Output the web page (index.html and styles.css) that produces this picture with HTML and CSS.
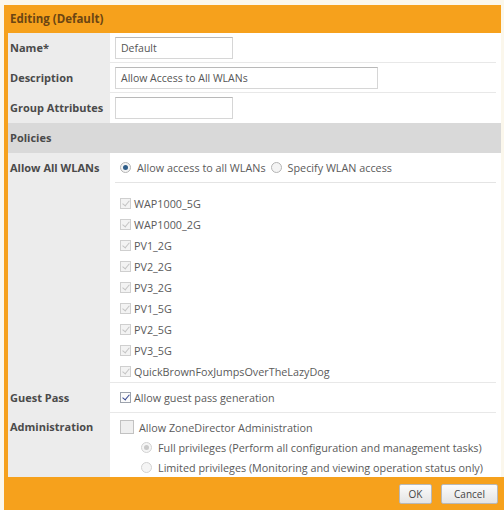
FILE: index.html
```html
<!DOCTYPE html>
<html lang="en">
<head>
  <meta charset="UTF-8" />
  <meta name="viewport" content="width=device-width, initial-scale=1.0" />
  <title>Editing (Default)</title>
  <link rel="stylesheet" href="styles.css">
</head>
<body>
  <div class="dialog">
    <div class="dialog-title">Editing (Default)</div>

    <div class="row">
      <div class="label">Name*</div>
      <div class="value"><div class="field short">Default</div></div>
    </div>
    <div class="row">
      <div class="label">Description</div>
      <div class="value"><div class="field long">Allow Access to All WLANs</div></div>
    </div>
    <div class="row">
      <div class="label">Group Attributes</div>
      <div class="value last"><div class="field short"></div></div>
    </div>

    <div class="section">Policies</div>

    <div class="row">
      <div class="label">Allow All WLANs</div>
      <div class="value block">
        <div class="option-line radios">
          <label><span class="rd on"></span>Allow access to all WLANs</label>
          <label><span class="rd"></span>Specify WLAN access</label>
        </div>
        <div class="wlan-list">
          <label class="item"><span class="cb on"></span>WAP1000_5G</label>
          <label class="item"><span class="cb on"></span>WAP1000_2G</label>
          <label class="item"><span class="cb on"></span>PV1_2G</label>
          <label class="item"><span class="cb on"></span>PV2_2G</label>
          <label class="item"><span class="cb on"></span>PV3_2G</label>
          <label class="item"><span class="cb on"></span>PV1_5G</label>
          <label class="item"><span class="cb on"></span>PV2_5G</label>
          <label class="item"><span class="cb on"></span>PV3_5G</label>
          <label class="item"><span class="cb on"></span>QuickBrownFoxJumpsOverTheLazyDog</label>
        </div>
      </div>
    </div>

    <div class="row">
      <div class="label">Guest Pass</div>
      <div class="value">
        <label class="item"><span class="cb active on"></span>Allow guest pass generation</label>
      </div>
    </div>

    <div class="row admin">
      <div class="label">Administration</div>
      <div class="value block last">
        <label class="item"><span class="cb big"></span>Allow ZoneDirector Administration</label>
        <label class="item sub"><span class="rd dim on"></span>Full privileges (Perform all configuration and management tasks)</label>
        <label class="item sub"><span class="rd dim"></span>Limited privileges (Monitoring and viewing operation status only)</label>
      </div>
    </div>

    <div class="dialog-footer">
      <button class="btn ok">OK</button>
      <button class="btn cancel">Cancel</button>
    </div>
  </div>
</body>
</html>
```

FILE: styles.css
```css
* {
  box-sizing: border-box;
}
body {
  font-family: 'Open Sans', 'DejaVu Sans', sans-serif;
  font-size: 10.8px;
  background: #fbf7ec;
  margin: 0;
  color: #5a5a5a;
}
.dialog {
  margin: 5px 3px 0 4px;
  border-left: 4px solid #f6a11c;
  background: #fff;
}
.dialog-title {
  height: 28px;
  line-height: 28px;
  background: #f6a11c;
  color: #6b4513;
  font-weight: bold;
  font-size: 11.5px;
  padding-left: 2px;
}
.row {
  display: grid;
  grid-template-columns: 102px 1fr;
}
.label {
  background: #ececec;
  color: #4a4a4a;
  font-weight: bold;
  font-size: 11px;
  line-height: 30px;
  padding-left: 2px;
  white-space: nowrap;
}
.value {
  display: flex;
  align-items: center;
  min-height: 30px;
  padding-left: 5px;
  border-bottom: 1px solid #e8e8e8;
  margin-right: 5px;
}
.value.block {
  display: block;
}
.value.last {
  border-bottom: none;
}
.field {
  height: 22px;
  line-height: 20px;
  border: 1px solid #d6d6d6;
  border-top-color: #b9b9b9;
  background: #fff;
  padding-left: 5px;
  color: #555;
  font-size: 10.5px;
}
.field.short {
  width: 118px;
}
.field.long {
  width: 263px;
}
.section {
  height: 30px;
  line-height: 30px;
  background: #d9d9d9;
  color: #4a4a4a;
  font-weight: bold;
  font-size: 11px;
  padding-left: 2px;
}
.option-line {
  display: flex;
  align-items: center;
  height: 30px;
  padding-left: 5px;
  border-bottom: 1px solid #e4e4e4;
}
.option-line label {
  display: flex;
  align-items: center;
  margin-right: 5px;
}
.option-line .rd {
  margin-right: 6px;
}
.wlan-list {
  padding: 10px 0 0 5px;
}
.item {
  display: flex;
  align-items: center;
  height: 21px;
  white-space: nowrap;
}
.value > .item {
  padding-left: 5px;
}
.admin .label {
  line-height: 28px;
}
.admin .value {
  padding-top: 4px;
}
.admin .item {
  height: 20px;
}
.item.sub {
  padding-left: 26px;
}

/* checkboxes */
.cb {
  position: relative;
  width: 11px;
  height: 11px;
  border: 1px solid #cfcfcf;
  background: #f3f3f3;
  margin-right: 3px;
  flex: none;
}
.cb.on::after {
  content: "";
  position: absolute;
  left: 3px;
  top: 0;
  width: 3px;
  height: 6px;
  border: solid #c4c4c4;
  border-width: 0 1.5px 1.5px 0;
  transform: rotate(40deg);
}
.cb.active {
  border-color: #9da3ad;
  background: #fbfbfb;
}
.cb.active.on::after {
  border-color: #34468f;
}
.cb.big {
  width: 14px;
  height: 14px;
  border-color: #c2c2c2;
  background: #efefef;
  margin-right: 5px;
}

/* radio buttons */
.rd {
  position: relative;
  width: 11px;
  height: 11px;
  border-radius: 50%;
  border: 1px solid #b4b4b4;
  background: #f4f4f4;
  margin-right: 6px;
  flex: none;
}
.rd.on::after {
  content: "";
  position: absolute;
  left: 2px;
  top: 2px;
  width: 5px;
  height: 5px;
  border-radius: 50%;
  background: #2f5d88;
}
.rd.dim {
  border-color: #d2d2d2;
  background: #f5f5f5;
}
.rd.dim.on::after {
  background: #c9c9c9;
}

.dialog-footer {
  display: flex;
  justify-content: flex-end;
  gap: 9px;
  height: 34px;
  padding: 0 6px 0 0;
  align-items: center;
  background: #f6a11c;
  margin-right: -3px;
}
.btn {
  height: 20px;
  padding: 0;
  border: 1px solid #b8b8b8;
  border-radius: 2px;
  background: linear-gradient(#fbfbfb, #e4e4e4);
  font-family: 'Open Sans', 'DejaVu Sans', sans-serif;
  font-size: 10px;
  color: #444;
}
.btn.ok {
  width: 33px;
}
.btn.cancel {
  width: 57px;
}
```
